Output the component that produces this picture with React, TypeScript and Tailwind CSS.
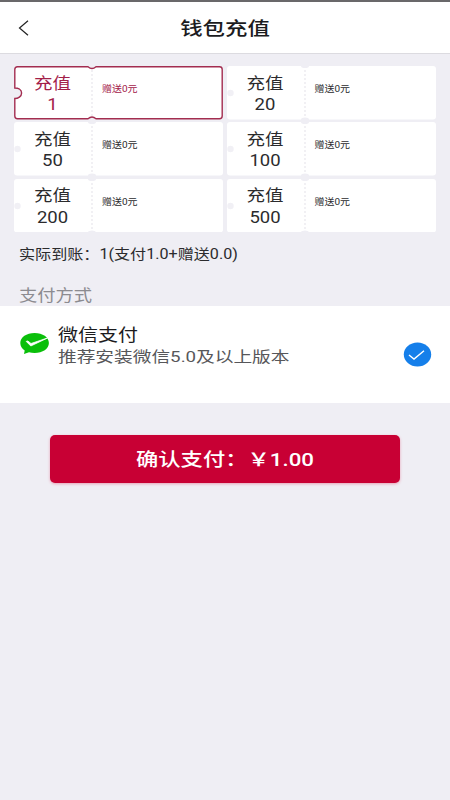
const amounts = [1, 20, 50, 100, 200, 500];

const OUTLINE =
  "M3.5 .8 H74 Q78 4.2 82 .8 H205.500 Q208.200 .8 208.200 3.500 V50 Q208.200 52.700 205.500 52.700 H82 Q78 49.300 74 52.700 H3.500 Q.8 52.700 .8 50 V32.500 C4 32.500 7.600 30.500 7.600 27 C7.600 23.500 4 22 .8 22 V3.500 Q.8 .8 3.500 .8 Z";

type TicketProps = {
  amount: number;
  active?: boolean;
};

const Ticket = ({ amount, active }: TicketProps) => {
  return (
    <div className={`relative flex h-[53.5px] ${active ? "text-[#a32049]" : "text-[#2b2b2d]"}`}>
      <svg className="absolute inset-0" width="209" height="53.5" viewBox="0 0 209 53.5" fill="none">
        {active ? (
          <path d={OUTLINE} fill="#fff" stroke="#a32d50" strokeWidth="1.4" />
        ) : (
          <>
            <rect width="209" height="53.5" rx="3" fill="#fff" />
            <circle cx="3.500" cy="27" r="3.200" fill="#f1f0f5" />
            <ellipse cx="78" cy="0" rx="4" ry="2" fill="#efeef4" />
            <ellipse cx="78" cy="53.5" rx="4" ry="2" fill="#efeef4" />
          </>
        )}
        <path d="M78 4 V50" stroke="#ebeaef" strokeWidth="1.4" strokeDasharray="2 2" />
      </svg>
      <div className="relative w-[77px] pt-[7.5px] text-center text-[18.5px] leading-[21.5px]">
        <p className="scale-y-[0.87]">充值</p>
        <p className="scale-y-[0.87]">{amount}</p>
      </div>
      <p className="relative pl-[11px] pt-[17.5px] text-[10px] leading-[14px] scale-y-[0.92] origin-top">赠送0元</p>
    </div>
  );
};

const Header = () => {
  return (
    <header className="flex h-[54px] items-center border-b border-t-2 border-b-[#dcdbe0] border-t-[#69686a] bg-white">
      <svg className="ml-[18px]" width="11" height="16" viewBox="0 0 11 16" fill="none">
        <path d="M10 .8 L1.500 8 L10 15.200" stroke="#222" strokeWidth="1.200" />
      </svg>
      <h1 className="flex-1 pr-[29px] pt-[2px] text-center text-[22.4px] font-medium text-[#1c1c1e] scale-y-[0.83]">钱包充值</h1>
    </header>
  );
};

const App = () => {
  return (
    <div className="h-[800px] w-[450px] overflow-hidden bg-[#efeef4] font-[Roboto,'Noto_Sans_CJK_SC',sans-serif]">
      <Header />
      <main>
        <div className="grid grid-cols-[209px_209px] gap-x-[3.5px] gap-y-[2.8px] pl-[14px] pt-[12px]">
          {amounts.map((amount, i) => (
            <Ticket key={amount} amount={amount} active={i === 0} />
          ))}
        </div>
        <p className="mt-[13px] h-5 pl-[19px] text-[16.1px] leading-5 text-[#2b2b2d] scale-y-[0.87]">
          实际到账：1(支付1.0+赠送0.0)
        </p>
        <p className="mt-[20px] h-[21px] pl-[19px] text-[18.3px] leading-[22px] text-[#8c8b90] scale-y-[0.85]">支付方式</p>

        <section className="flex h-[97px] bg-white pl-[20px]">
          <svg className="mt-[26px]" width="30" height="23" viewBox="0 0 30 23">
            <path
              d="M14.600 1 C6.500 1 .3 5.300 .3 11 C.3 14 2 16.700 4.700 18.500 L4 22 L9 20.300 C10.800 20.800 12.600 21 14.600 21 C22.700 21 28.900 16.800 28.900 11 C28.900 5.300 22.700 1 14.600 1 Z"
              fill="#0abf0a"
            />
            <path d="M6.200 9.400 L10.800 14 L27.500 6 L11 11.500 L7.800 9 Z" fill="#fff" stroke="#fff" strokeWidth=".8" />
          </svg>
          <div className="ml-[8px] flex-1 pt-[17.5px] whitespace-nowrap">
            <p className="h-[22px] text-[20px] leading-[22px] text-[#1c1c1e] scale-y-[0.85]">微信支付</p>
            <p className="h-[22px] text-[18.7px] leading-[22px] text-[#57575a] scale-y-[0.8]">推荐安装微信5.0及以上版本</p>
          </div>
          <svg className="mr-[18px] mt-[36px]" width="29" height="25" viewBox="0 0 29 25" fill="none">
            <ellipse cx="14.500" cy="12.500" rx="13.700" ry="12" fill="#157fea" />
            <path d="M6 13 L11 17 L21 8.800" stroke="#fff" strokeWidth="1.400" />
          </svg>
        </section>

        <button className="mx-auto mt-[32px] block h-[48px] w-[350px] rounded-[5px] bg-[#c80034] text-white shadow-[0_1px_3px_#e9a0b5]">
          <span className="block text-[22.3px] font-medium leading-[48px] scale-y-[0.84]">确认支付：￥1.00</span>
        </button>
      </main>
    </div>
  );
};

export default App;
